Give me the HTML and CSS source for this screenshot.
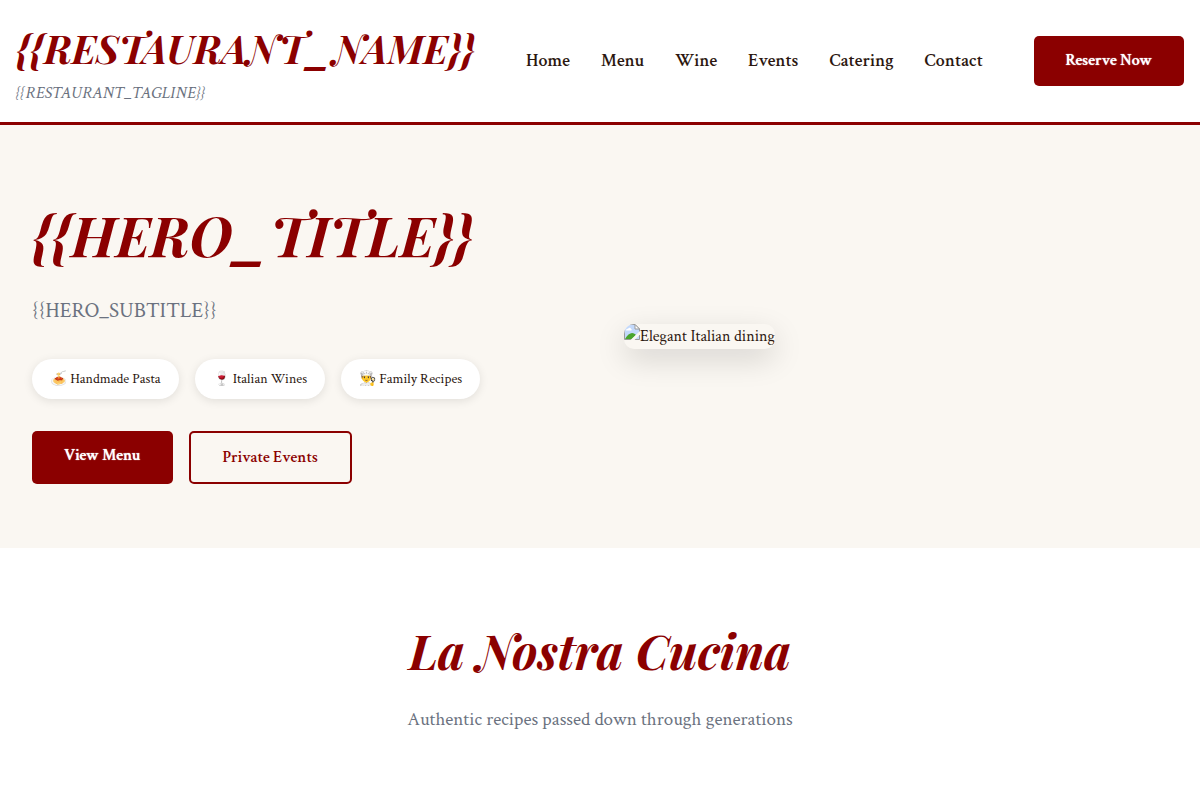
FILE: index.html
```html
<!DOCTYPE html>
<html lang="en">
<head>
<meta charset="utf-8">
<meta name="viewport" content="width=device-width, initial-scale=1">
<title>{{RESTAURANT_NAME}}</title>
<link rel="stylesheet" href="styles.css">
</head>
<body>
<header class="header">
  <div class="brand">
    <div class="logo">{{RESTAURANT_NAME}}</div>
    <div class="tagline">{{RESTAURANT_TAGLINE}}</div>
  </div>
  <nav class="nav">
    <a href="#home">Home</a>
    <a href="#menu">Menu</a>
    <a href="#wine">Wine</a>
    <a href="#events">Events</a>
    <a href="#catering">Catering</a>
    <a href="#contact">Contact</a>
  </nav>
  <a class="btn btn-primary" href="#reserve">Reserve Now</a>
</header>
<main>
  <section class="hero" id="home">
    <div class="hero-grid">
      <div class="hero-content">
        <h1 class="hero-title">{{HERO_TITLE}}</h1>
        <p class="hero-subtitle">{{HERO_SUBTITLE}}</p>
        <div class="features">
          <span class="feature">🍝 Handmade Pasta</span>
          <span class="feature">🍷 Italian Wines</span>
          <span class="feature">👨‍🍳 Family Recipes</span>
        </div>
        <div class="actions">
          <a class="btn btn-primary" href="#menu">View Menu</a>
          <a class="btn btn-outline" href="#events">Private Events</a>
        </div>
      </div>
      <div class="hero-image">
        <div class="photo">
          <svg class="photo-icon" width="16" height="16" viewBox="0 0 16 16" aria-hidden="true">
            <path d="M0.5 0.5H11L15.5 5V15.5H0.5Z" fill="#c3d9fb" stroke="#9a9a9a"/>
            <path d="M11 0.5V5H15.5Z" fill="#fff" stroke="#9a9a9a"/>
            <path d="M2 6.500C2 5 3.500 4.500 4 5C4.500 3 7 3.500 7 5C8 5 8 6.500 7 6.500Z" fill="#fff"/>
            <path d="M1 15C3 11 6 9 8 9C10 9 11 10 12 11L8 15Z" fill="#4aa52e"/>
            <path d="M6.500 16L16 7V10.500L10.500 16Z" fill="#faf7f2"/>
          </svg><span>Elegant Italian dining</span>
        </div>
      </div>
    </div>
  </section>
  <section class="cuisine" id="menu">
    <h2 class="section-title">La Nostra Cucina</h2>
    <p class="section-subtitle">Authentic recipes passed down through generations</p>
  </section>
</main>
</body>
</html>
```
FILE: styles.css
```css
* { box-sizing: border-box; margin: 0; padding: 0; }

body {
  font-family: "Crimson Text", "Liberation Serif", serif;
  font-size: 16px;
  line-height: 26px;
  color: #2c1810;
  background: #fff;
}

a { color: inherit; text-decoration: none; }

.header {
  display: flex;
  align-items: center;
  justify-content: space-between;
  padding: 16px;
  border-bottom: 3px solid #8b0000;
}

.logo, .hero-title, .section-title {
  font-family: "Playfair Display", "Liberation Serif", serif;
  font-weight: 700;
  font-style: italic;
  color: #8b0000;
}

.logo { font-size: 39px; line-height: 64px; }
.tagline { font-size: 17px; font-style: italic; color: #6b7280; }

.nav { display: flex; gap: 31px; font-size: 18px; font-weight: 600; }

.btn {
  padding: 12px 32px;
  border-radius: 5px;
  font-weight: 600;
  white-space: nowrap;
}
.btn-primary { background: #8b0000; color: #fff; text-shadow: 0 0 1px #fff; }
.btn-outline { border: 2px solid #8b0000; color: #8b0000; }

.hero { background: #faf7f2; padding: 64px 0; }
.hero-grid {
  display: grid;
  grid-template-columns: 1fr 1fr;
  gap: 48px;
  align-items: center;
  max-width: 1200px;
  margin: 0 auto;
  padding: 0 32px;
}
.hero-title { font-size: 55px; line-height: 90px; margin-bottom: 16px; }
.hero-subtitle { font-size: 21px; line-height: 32px; margin-bottom: 32px; color: #6b7280; }

.features { display: flex; gap: 16px; margin-bottom: 32px; }
.feature {
  padding: 8px 18px;
  border-radius: 25px;
  background: #fff;
  box-shadow: 0 2px 10px rgba(0, 0, 0, 0.1);
  font-size: 14px;
  line-height: 24px;
  white-space: nowrap;
}
.actions { display: flex; gap: 16px; line-height: 25px; }

.hero-image { display: flex; line-height: 25px; }
.photo {
  display: flex;
  border-radius: 10px;
  overflow: hidden;
  background: #faf7f2;
  box-shadow: 0 10px 30px rgba(0, 0, 0, 0.15);
}
.photo-icon { flex: none; }

.cuisine { padding: 64px 32px; text-align: center; }
.section-title { font-size: 48px; line-height: 77px; margin-bottom: 16px; }
.section-subtitle { font-size: 19px; line-height: 30px; color: #6b7280; }
```
